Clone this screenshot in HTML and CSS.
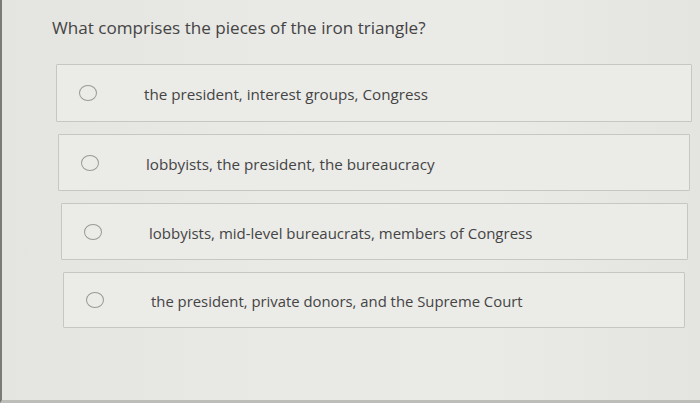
FILE: index.html
```html
<!DOCTYPE html>
<html>
<head>
<meta charset="utf-8">
<link rel="stylesheet" href="styles.css">
</head>
<body>
<div class="page">
  <h1 class="question">What comprises the pieces of the iron triangle?</h1>
  <div class="options">
    <div class="option o1"><span class="radio"></span><span class="label">the president, interest groups, Congress</span></div>
    <div class="option o2"><span class="radio"></span><span class="label">lobbyists, the president, the bureaucracy</span></div>
    <div class="option o3"><span class="radio"></span><span class="label">lobbyists, mid-level bureaucrats, members of Congress</span></div>
    <div class="option o4"><span class="radio"></span><span class="label">the president, private donors, and the Supreme Court</span></div>
  </div>
</div>
</body>
</html>
```
FILE: styles.css
```css
html, body {
  margin: 0;
  padding: 0;
}
body {
  width: 700px;
  height: 403px;
  overflow: hidden;
  background: linear-gradient(90deg, #e4e4e0 0%, #e9e9e6 40%, #eaeae7 70%, #e4e4e1 100%);
  font-family: "Open Sans", "Liberation Sans", sans-serif;
  color: #4e4e4e;
}
.page {
  box-sizing: border-box;
  height: 403px;
  border-left: 2px solid #7a7a78;
  border-bottom: 3px solid #bdbdb9;
  padding: 16px 0 0 50px;
}
.question {
  margin: 0;
  font-size: 17.1px;
  font-weight: 400;
  line-height: 24px;
  color: #444;
}
.options {
  display: flex;
  flex-direction: column;
  gap: 12px;
  margin-top: 24px;
}
.option {
  box-sizing: border-box;
  height: 57px;
  display: flex;
  align-items: center;
  background: #ebebe8;
  border: 1px solid #c6c6c2;
  border-radius: 1px;
}
.o1 { margin-left: 4px; width: 636px; height: 58px; }
.o2 { margin-left: 6px; width: 632px; }
.o3 { margin-left: 9px; width: 627px; }
.o4 { margin-left: 11px; width: 622px; height: 56px; }
.radio {
  box-sizing: border-box;
  width: 18px;
  height: 16px;
  border: 1.5px solid #999996;
  border-radius: 50%;
  margin-left: 22px;
  flex: none;
}
.label {
  margin-left: 47px;
  font-size: 15.2px;
  color: #444;
  margin-top: 2px;
}
.o3 .label { font-size: 15px; }
.o4 .label { font-size: 14.85px; }
```
